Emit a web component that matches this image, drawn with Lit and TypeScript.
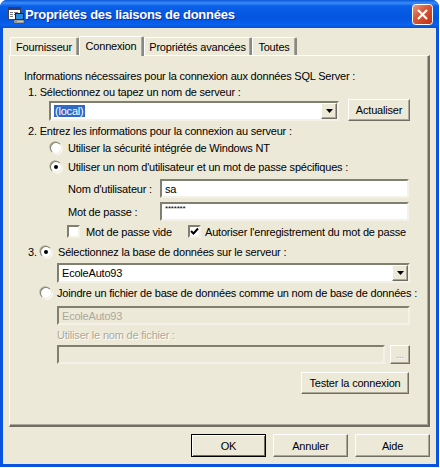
import { LitElement, html, css, svg } from "lit";
import { customElement } from "lit/decorators.js";

const arrow = svg`<svg width="7" height="4" viewBox="0 0 7 4"><path d="M0 0h7L3.5 4z" fill="#000"/></svg>`;

@customElement("app-root")
export class AppRoot extends LitElement {
  static styles = css`
    :host { display: block; width: 440px; height: 468px; background: #fff; font: 11px "Liberation Sans", Arial, sans-serif; letter-spacing: -0.2px; color: #000; overflow: hidden; }
    * { box-sizing: border-box; }
    .win { width: 439px; height: 467px; background: #0854e0; border-radius: 7px 7px 0 0; display: flex; flex-direction: column; }
    .title { height: 28px; flex: none; display: flex; align-items: center; padding: 1px 6px 0 7px;
      background: linear-gradient(#0a57d8 0, #3a8cf8 3px, #0a5fe8 6px, #0455e0 18px, #0a62ee 25px, #0850d0 28px); border-radius: 7px 7px 0 0; }
    .title svg { flex: none; }
    .tt { color: #fff; font: bold 13px "Liberation Sans", sans-serif; letter-spacing: -0.25px; text-shadow: 1px 1px 0 #0f2f9a; flex: 1; white-space: nowrap; }
    .close { width: 21px; height: 21px; }
    .body { flex: 1; margin: 0 3px 3px 3px; background: #ece9d8; padding: 7px 6px 0 6px; display: flex; flex-direction: column; }
    .tabs { display: flex; height: 20px; padding-left: 1px; align-items: flex-end; position: relative; z-index: 1; }
    .tab { height: 18px; border: 1px solid #fff; border-right: 2px solid #888; border-bottom: none; border-radius: 2px 2px 0 0; display: flex; align-items: center; justify-content: center; box-shadow: inset -1px 0 0 #aca899; white-space: nowrap; }
    .tab.t1 { width: 69px; } .tab.t2 { width: 65px; height: 20px; background: #ece9d8; margin-bottom: -1px; padding-bottom: 2px; }
    .tab.t3 { width: 108px; } .tab.t4 { width: 45px; }
    .panel { height: 372px; border: 1px solid #fff; border-right: 2px solid #716f64; border-bottom: 2px solid #716f64; box-shadow: inset -1px -1px 0 #aca899; padding: 12px 0 0 14px; display: flex; flex-direction: column; }
    .row { display: flex; align-items: center; white-space: nowrap; }
    .lbl { height: 16px; }
    .lbl14 { height: 14px; }
    .i1 { padding-left: 4px; }
    .i2 { padding-left: 26px; gap: 6px; }
    .inp { height: 19px; background: #fff; border: 2px solid; border-color: #808070 #f4f2e8 #f4f2e8 #808070; display: flex; align-items: center; padding-left: 3px; position: relative; }
    .combo { padding-right: 18px; }
    .dis { background: #ece9d8; color: #aca899; }
    .btn { border: 1px solid #fff; border-right-color: #716f64; border-bottom-color: #716f64; box-shadow: inset -1px -1px 0 #aca899; display: flex; align-items: center; justify-content: center; background: #ece9d8; }
    .drop { position: absolute; right: 0; top: 0; bottom: 0; width: 16px; }
    .sel { background: #316ac5; color: #fff; padding: 0 1px; }
    .radio { width: 12px; height: 12px; border-radius: 50%; flex: none; background: #fff; border: 1px solid; border-color: #808070 #ece9d8 #ece9d8 #808070; box-shadow: -1px -1px 0 -0.3px #b0ad9c, 1px 1px 0 -0.3px #fff; display: flex; align-items: center; justify-content: center; }
    .radio.on::after { content: ""; width: 4px; height: 4px; border-radius: 50%; background: #000; }
    .check { width: 13px; height: 13px; flex: none; background: #fff; border: 2px solid; border-color: #808070 #f4f2e8 #f4f2e8 #808070; }
    .check svg { display: block; }
    .footer { display: flex; justify-content: flex-end; gap: 7px; padding-top: 7px; }
    .footer .btn { width: 75px; height: 23px; }
    .ok { border: 1px solid #000 !important; box-shadow: inset 1px 1px 0 #fff, inset -1px -1px 0 #716f64; }
    .h19 { height: 19px; }
    .ind33 { padding-left: 33px; }
    .ghost { color: #aca899; text-shadow: 1px 1px 0 #fff; }
    .srv { height: 22px; padding-left: 25px; gap: 9px; align-items: flex-end; }
    .cred { padding-left: 44px; }
    .cap { width: 92px; }
    .stars { align-items: flex-start; font-size: 8px; line-height: 9px; }
    .opts { height: 21px; padding-left: 43px; }
    .step { width: 12px; }
  `;

  render() {
    return html`<div class="win">
      <div class="title">
        <svg width="18" height="18" viewBox="0 0 18 18">
          <rect x="1.5" y="1.5" width="12" height="12" fill="#fff" stroke="#444"/>
          <rect x="1" y="1" width="13" height="3" fill="#2a3a7a"/>
          <path d="M3 6.5h3M7 6.5h4M3 8.5h3M7 8.5h2M3 10.5h3" stroke="#777"/>
          <rect x="8.5" y="7.5" width="8" height="6" fill="#2a8ae0" stroke="#123"/>
          <rect x="7" y="14" width="10" height="3" fill="#c8c8c0" stroke="#444" stroke-width=".6"/>
          <rect x="8" y="15" width="2" height="1" fill="#2c2"/>
        </svg>
        <div class="tt">Propriétés des liaisons de données</div>
        <svg class="close" viewBox="0 0 21 21">
          <defs><linearGradient id="g" x1="0" y1="0" x2="1" y2="1"><stop offset="0" stop-color="#e8a088"/><stop offset=".4" stop-color="#d85a3c"/><stop offset="1" stop-color="#c03010"/></linearGradient></defs>
          <rect x=".5" y=".5" width="20" height="20" rx="3" fill="url(#g)" stroke="#fff"/>
          <path d="M6 6l9 9M15 6l-9 9" stroke="#fff" stroke-width="2.2"/>
        </svg>
      </div>
      <div class="body">
        <div class="tabs">
          <div class="tab t1">Fournisseur</div><div class="tab t2">Connexion</div><div class="tab t3">Propriétés avancées</div><div class="tab t4">Toutes</div>
        </div>
        <div class="panel">
          <div class="row lbl">Informations nécessaires pour la connexion aux données SQL Server :</div>
          <div class="row lbl14" style="margin-top:1px"><span class="i1">1. Sélectionnez ou tapez un nom de serveur :</span></div>
          <div class="row srv">
            <div class="inp combo" style="width:290px;height:20px"><span class="sel">(local)</span><div class="btn drop">${arrow}</div></div>
            <div class="btn" style="width:62px;height:22px">Actualiser</div>
          </div>
          <div class="row lbl14" style="margin-top:3px"><span class="i1">2. Entrez les informations pour la connexion au serveur :</span></div>
          <div class="row i2 h19"><div class="radio"></div>Utiliser la sécurité intégrée de Windows NT</div>
          <div class="row i2 h19"><div class="radio on"></div>Utiliser un nom d'utilisateur et un mot de passe spécifiques :</div>
          <div class="row h19 cred" style="margin-top:3px"><span class="cap">Nom d'utilisateur :</span><div class="inp" style="width:249px">sa</div></div>
          <div class="row h19 cred" style="margin-top:4px"><span class="cap">Mot de passe :</span><div class="inp stars" style="width:249px">*******</div></div>
          <div class="row opts"><div class="check"></div><span style="margin-left:6px;width:102px">Mot de passe vide</span><div class="check"><svg width="9" height="9" viewBox="0 0 9 9"><path d="M1 4l2.5 2.5L8 1.5" fill="none" stroke="#000" stroke-width="2"/></svg></div><span style="margin-left:4px">Autoriser l'enregistrement du mot de passe</span></div>
          <div class="row i1" style="height:18px;margin-top:1px"><span class="step">3.</span><div class="radio on"></div><span style="margin-left:6px">Sélectionnez la base de données sur le serveur :</span></div>
          <div class="row ind33" style="margin-top:2px"><div class="inp combo" style="width:353px;height:20px">EcoleAuto93<div class="btn drop">${arrow}</div></div></div>
          <div class="row" style="height:20px;padding-left:16px;gap:5px"><div class="radio"></div>Joindre un fichier de base de données comme un nom de base de données :</div>
          <div class="row ind33" style="margin-top:3px"><div class="inp dis" style="width:353px">EcoleAuto93</div></div>
          <div class="row ind33 ghost" style="height:20px">Utiliser le nom de fichier :</div>
          <div class="row ind33" style="gap:5px"><div class="inp dis" style="width:328px"></div><div class="btn ghost" style="width:20px;height:19px;font-size:10px">...</div></div>
          <div class="row" style="margin-top:8px;justify-content:flex-end;padding-right:19px"><div class="btn" style="width:108px;height:22px">Tester la connexion</div></div>
        </div>
        <div class="footer">
          <div class="btn ok">OK</div><div class="btn">Annuler</div><div class="btn">Aide</div>
        </div>
      </div>
    </div>`;
  }
}
